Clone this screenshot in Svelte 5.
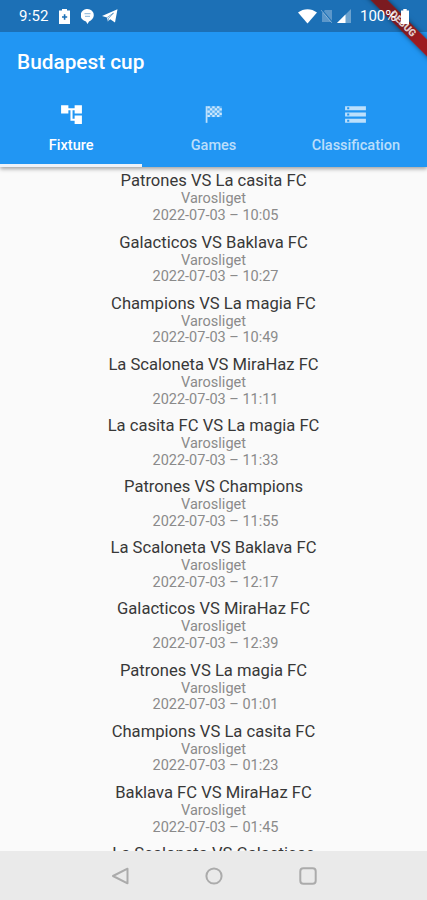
<script>
  const tabs = ['Fixture', 'Games', 'Classification'];
  let activeTab = $state('Fixture');

  const place = 'Varosliget';
  const matches = [
    { teams: 'Patrones VS La casita FC', time: '10:05' },
    { teams: 'Galacticos VS Baklava FC', time: '10:27' },
    { teams: 'Champions VS La magia FC', time: '10:49' },
    { teams: 'La Scaloneta VS MiraHaz FC', time: '11:11' },
    { teams: 'La casita FC VS La magia FC', time: '11:33' },
    { teams: 'Patrones VS Champions', time: '11:55' },
    { teams: 'La Scaloneta VS Baklava FC', time: '12:17' },
    { teams: 'Galacticos VS MiraHaz FC', time: '12:39' },
    { teams: 'Patrones VS La magia FC', time: '01:01' },
    { teams: 'Champions VS La casita FC', time: '01:23' },
    { teams: 'Baklava FC VS MiraHaz FC', time: '01:45' },
    { teams: 'La Scaloneta VS Galacticos' }
  ];
</script>

<div class="phone">
  <header>
    <div class="status-bar">
      <span class="clock">9:52</span>
      <svg class="battery-plus" width="11" height="15" viewBox="0 0 11 15">
        <path fill="#fff" fill-rule="evenodd" d="M3 0h5v1.5h3V15H0V1.5h3zM4.8 5.2v2H3v1.6h1.8v2h1.6v-2h1.8V7.2H6.4v-2z" />
      </svg>
      <svg class="chat" width="13" height="15" viewBox="0 0 13 15">
        <path fill="#fff" d="M6.5 0a6.3 6.3 0 0 1 6.3 6.3c0 3-2.3 5-4.8 6.2L6.5 15 5 12.5A6.3 6.3 0 0 1 6.5 0z" />
        <path stroke="#1c70b6" stroke-width=".9" opacity=".6" d="M3.5 4.7h6M4 7.3h5" />
      </svg>
      <svg class="plane" width="16" height="14" viewBox="0 0 16 14">
        <path fill="#fff" d="M0 6.9 15.5.3 13 13.5 8.2 10.3 5.8 12.6 5 8.5z" />
        <path stroke="#1c70b6" stroke-width=".6" fill="none" d="M5.2 8.5 11.5 4 6.6 9.3 6 12" />
      </svg>

      <div class="status-right">
        <svg width="19" height="15" viewBox="0 0 19 15">
          <path fill="#fff" d="M0 3.6C5.6-.9 13.4-.9 19 3.6L9.5 14.6z" />
        </svg>
        <svg class="sim" width="12" height="14" viewBox="0 0 12 14">
          <path fill="#fff" opacity=".28" d="M4 1h7v12H1V4z" />
          <path stroke="#1c70b6" stroke-width="1.2" d="M1 1l11 13" />
          <path stroke="#fff" opacity=".35" stroke-width="1" d="M0 1l11 13" />
        </svg>
        <svg class="signal" width="14" height="14" viewBox="0 0 14 14">
          <path fill="#fff" opacity=".35" d="M14 0v14H0z" />
          <path fill="#fff" d="M8.5 5.5V14H0z" />
        </svg>
        <span class="percent">100%</span>
        <svg class="battery" width="8" height="15" viewBox="0 0 8 15">
          <path fill="#fff" d="M2.3 0h3.4v1.5H8V15H0V1.5h2.3z" />
        </svg>
      </div>
    </div>

    <h1>Budapest cup</h1>

    <nav>
      {#each tabs as tab}
        <button class="tab" class:active={activeTab === tab} onclick={() => (activeTab = tab)}>
          <svg width="25" height="25" viewBox="0 0 24 24" fill="currentColor">
            {#if tab === 'Fixture'}
              <path d="M22 11V3h-7v3H9V3H2v8h7V8h2v10h4v3h7v-8h-7v3h-2V8h2v3z" />
            {:else if tab === 'Games'}
              <path d="M4.5 4h1.7v16H4.5z" />
              <path opacity=".35" d="M6.2 4H20v10.5H6.2z" />
              <path d="M6.2 4h2.3v2.1H6.2zM10.8 4h2.3v2.1h-2.3zM15.4 4h2.3v2.1h-2.3zM8.5 6.1h2.3v2.1H8.5zM13.1 6.1h2.3v2.1h-2.3zM17.7 6.1H20v2.1h-2.3zM6.2 8.2h2.3v2.1H6.2zM10.8 8.2h2.3v2.1h-2.3zM15.4 8.2h2.3v2.1h-2.3zM8.5 10.3h2.3v2.1H8.5zM13.1 10.3h2.3v2.1h-2.3zM17.7 10.3H20v2.1h-2.3zM6.2 12.4h2.3v2.1H6.2zM10.8 12.4h2.3v2.1h-2.3zM15.4 12.4h2.3v2.1h-2.3z" />
            {:else}
              <path fill-rule="evenodd" d="M2 20h20v-4H2zm2-3h2v2H4zM2 4v4h20V4zm4 3H4V5h2zm-4 7h20v-4H2zm2-3h2v2H4z" />
            {/if}
          </svg>
          <span>{tab}</span>
        </button>
      {/each}
    </nav>

    <div class="debug"><span>DEBUG</span></div>
  </header>

  <main>
    {#each matches as match}
      <div class="match">
        <div class="teams">{match.teams}</div>
        {#if match.time}
          <div class="detail">{place}</div>
          <div class="detail date">2022-07-03 – {match.time}</div>
        {/if}
      </div>
    {/each}
  </main>

  <footer>
    <svg width="18" height="18" viewBox="0 0 18 18"><path d="M16.5 1.7v14.6L2 9z" /></svg>
    <svg width="18" height="18" viewBox="0 0 18 18"><circle cx="9" cy="9" r="7.6" /></svg>
    <svg width="18" height="18" viewBox="0 0 18 18"><rect x="1.3" y="1.3" width="15.4" height="15.4" rx="3" /></svg>
  </footer>
</div>

<style>
  .phone {
    display: flex;
    flex-direction: column;
    width: 427px;
    height: 900px;
    overflow: hidden;
    background: #fafafa;
    font-family: Roboto, sans-serif;
  }

  header {
    position: relative;
    z-index: 1;
    flex: none;
    height: 167px;
    display: flex;
    flex-direction: column;
    background: #2196f3;
    color: #fff;
    box-shadow: 0 2px 4px rgba(0, 0, 0, 0.35);
  }

  .status-bar {
    display: flex;
    align-items: center;
    height: 32px;
    padding: 0 18px 0 19px;
    box-sizing: border-box;
    background: #1c70b6;
    font-size: 15px;
  }
  .clock {
    width: 40px;
    letter-spacing: 0.2px;
  }
  .chat {
    margin-left: 11px;
  }
  .plane {
    margin-left: 8px;
  }
  /* system icons stay above the debug ribbon */
  .status-right {
    position: relative;
    z-index: 2;
    display: flex;
    align-items: center;
    margin-left: auto;
  }
  .sim {
    margin-left: 4px;
  }
  .signal {
    margin-left: 4px;
  }
  .percent {
    margin-left: 9px;
    width: 41px;
  }

  h1 {
    margin: 0;
    padding-left: 17px;
    height: 59px;
    line-height: 60px;
    font-size: 20.8px;
    font-weight: 500;
  }

  nav {
    display: flex;
    flex: 1;
  }
  .tab {
    flex: 1;
    display: flex;
    flex-direction: column;
    align-items: center;
    padding: 11px 0 0;
    border: none;
    border-bottom: 3px solid transparent;
    background: none;
    color: rgba(255, 255, 255, 0.7);
    font: 500 14.5px/18px Roboto, sans-serif;
  }
  .tab span {
    margin-top: 10px;
  }
  .tab.active {
    color: #fff;
    border-bottom-color: #eef2f8;
  }

  /* clips the rotated ribbon to the top right corner */
  .debug {
    position: absolute;
    top: 0;
    right: 0;
    width: 70px;
    height: 70px;
    overflow: hidden;
  }
  .debug span {
    position: absolute;
    left: -4px;
    top: 18px;
    width: 100px;
    height: 12px;
    line-height: 12.5px;
    text-align: center;
    background: linear-gradient(90deg, #7b1b20 55%, #9d1b20 70%);
    box-shadow: 0 0 5px rgba(0, 0, 0, 0.5);
    color: rgba(255, 255, 255, 0.8);
    font-size: 10px;
    font-weight: 900;
    transform: rotate(45deg);
  }

  main {
    flex: 1;
    min-height: 0;
    overflow: hidden;
    padding-top: 4.4px;
    text-align: center;
  }
  .match {
    height: 61.15px;
  }
  .teams {
    font-size: 16.6px;
    line-height: 20px;
    color: #383838;
  }
  .detail {
    font-size: 14.5px;
    line-height: 16.8px;
    color: #8a8a8a;
  }
  .date {
    padding-left: 4px;
  }

  footer {
    flex: none;
    display: flex;
    align-items: center;
    justify-content: center;
    gap: 76px;
    height: 49px;
    background: #eaeaea;
  }
  footer svg {
    fill: none;
    stroke: #ababab;
    stroke-width: 2;
    stroke-linejoin: round;
  }
</style>
